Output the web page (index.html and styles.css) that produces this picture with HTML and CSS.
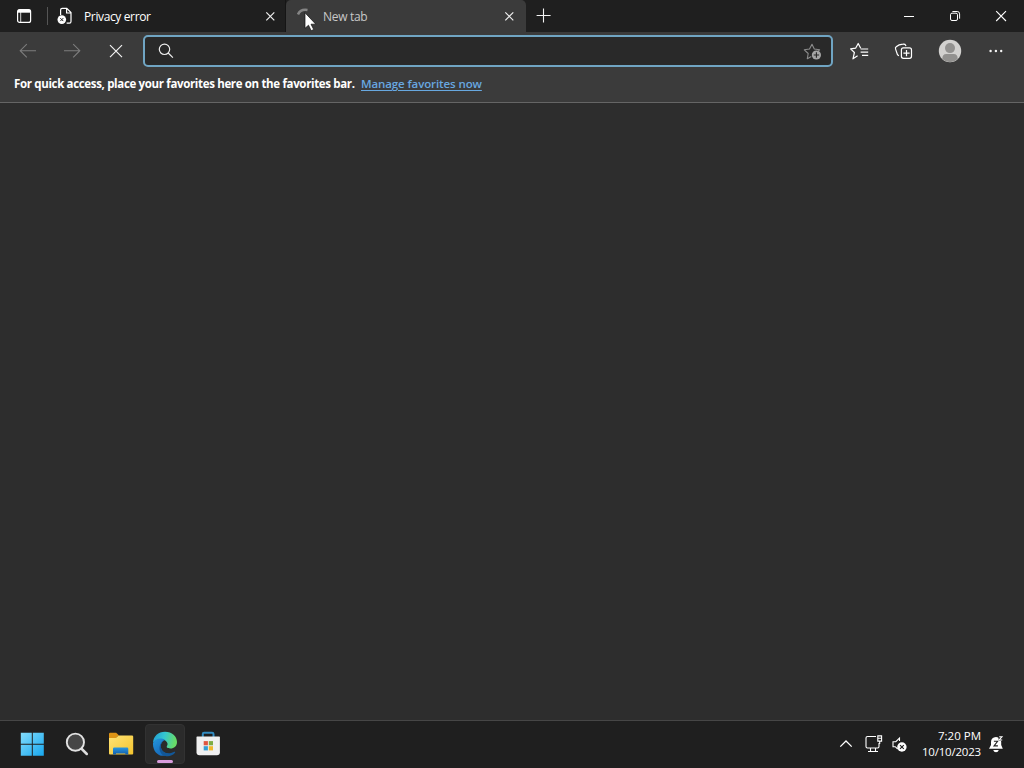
FILE: index.html
```html
<!DOCTYPE html>
<html lang="en">
<head>
<meta charset="utf-8">
<title>New tab</title>
<link rel="stylesheet" href="styles.css">
</head>
<body>
<div class="screen">
  <header class="titlebar">
    <div class="tab-actions">
      <svg width="16" height="16" viewBox="0 0 16 16" fill="none" stroke="#fff" stroke-width="1.2"><rect x="1.6" y="1.6" width="13" height="12.8" rx="2"/><path d="M2 3.2h12.4" stroke-width="3"/><path d="M4.7 4v10" stroke-width=".8"/></svg>
    </div>
    <div class="tab">
      <svg class="favicon" width="16" height="18" viewBox="0 0 16 18" fill="none" stroke="#fff" stroke-width="1.2"><path d="M3.6 8V3q0-1.6 1.6-1.6h4.6l4.2 4.2v9q0 1.6-1.6 1.6H9.6M9.6 1.6V6H14"/><circle cx="4.8" cy="12.6" r="4.3" fill="#fff" stroke="none"/><path d="M3.3 11.1l3 3m0-3l-3 3" stroke="#222" stroke-width="1"/></svg>
      <span class="label label-privacy">Privacy error</span>
      <svg class="tab-close" width="10" height="10" viewBox="0 0 10 10" stroke="#eee" stroke-width="1.2"><path d="M1.3 1.3l8 8m0-8l-8 8"/></svg>
    </div>
    <div class="tab active">
      <svg class="favicon" width="16" height="18" viewBox="0 0 16 18" fill="none" stroke="#858585" stroke-width="2.5"><path d="M1 7.4Q3.5 1.8 10.5 3"/></svg>
      <span class="label label-new">New tab</span>
      <svg class="tab-close" width="10" height="10" viewBox="0 0 10 10" stroke="#eee" stroke-width="1.2"><path d="M1.3 1.3l8 8m0-8l-8 8"/></svg>
    </div>
    <div class="new-tab"><svg width="16" height="16" viewBox="0 0 16 16" stroke="#f4f4f4" stroke-width="1.1"><path d="M.6 7.5h14M7.5.5v14"/></svg></div>
    <div class="window-controls">
      <svg width="46" height="32" viewBox="0 0 46 32" stroke="#fff"><path d="M18 16.5h10"/></svg>
      <svg width="46" height="32" viewBox="0 0 46 32" fill="none" stroke="#fff"><rect x="18.5" y="13.2" width="7" height="7.3" rx="1.5"/><path d="M20.4 11.5h4.8q2.4 0 2.4 2.4v4.8"/></svg>
      <svg width="46" height="32" viewBox="0 0 46 32" stroke="#fff" stroke-width="1.1"><path d="M18.2 11.2l9.8 9.8m0-9.8L18.2 21"/></svg>
    </div>
  </header>

  <nav class="toolbar">
    <div class="nav-buttons">
      <svg width="44" height="38" viewBox="0 0 44 38" fill="none" stroke="#7d7d7d" stroke-width="1.1"><path d="M30 18.7H14.2m6.6-6.6l-6.6 6.6 6.6 6.6"/></svg>
      <svg width="44" height="38" viewBox="0 0 44 38" fill="none" stroke="#7d7d7d" stroke-width="1.1"><path d="M14 18.7h15.8m-6.6-6.6l6.6 6.6-6.6 6.6"/></svg>
      <svg width="44" height="38" viewBox="0 0 44 38" stroke="#f3f3f3" stroke-width="1.2"><path d="M16 13.1l12 12m0-12l-12 12"/></svg>
    </div>
    <div class="address">
      <svg width="16" height="16" viewBox="0 0 16 16" fill="none" stroke="#eee" stroke-width="1.2"><circle cx="6.5" cy="6.3" r="5.2"/><path d="M10.2 10l4.7 4.7"/></svg>
      <svg width="20" height="20" viewBox="0 0 20 20" fill="none" stroke="#8c8c8c" stroke-width="1.1" stroke-linejoin="round"><path d="M8.3 15.6l-4 2.1.9-5.2L1.3 8.8l5.2-.8L9 3.2 11.3 8l5.3.8-1.4 1.3"/><circle cx="13.4" cy="14" r="4.6" fill="#a5a5a5" stroke="none"/><path d="M13.4 11.3v5.4m-2.7-2.7h5.4" stroke="#292929"/></svg>
    </div>
    <div class="actions">
      <svg width="44" height="38" viewBox="0 0 44 38" fill="none" stroke="#fff" stroke-width="1.2" stroke-linejoin="round"><path d="M19.6 23.8l-4.6 3 1.4-6.3-3.8-3.6 5-.7 2.6-4.7 2.5 4.7M22.6 17H30.2m-7.6 3.2h7.6m-6.2 3.2h6.2"/></svg>
      <svg width="44" height="38" viewBox="0 0 44 38" fill="none" stroke="#fff" stroke-width="1.2"><path d="M17 23.8q-1-.3-1.6-1.4l-1.8-5.3q-.6-1.4.6-2.3 2.6-2.4 6.7-2.7 2.2-.3 2.7 1l.3 1"/><rect x="19.4" y="15.9" width="10.1" height="10.4" rx="2"/><path d="M24.5 18v6.2m-3.1-3.1h6.2"/></svg>
      <svg class="profile" width="46" height="38" viewBox="0 0 46 38"><circle cx="24" cy="19" r="11.2" fill="#d2d1cf"/><circle cx="24" cy="16.1" r="5" fill="#92918f"/><path d="M16.3 27.1q0-5 4-5h7.4q4 0 4 5a11.2 11.2 0 0 1-15.4 0z" fill="#92918f"/></svg>
      <svg width="46" height="38" viewBox="0 0 46 38" fill="#f4f4f4"><circle cx="18.6" cy="19" r="1.2"/><circle cx="23.9" cy="19" r="1.2"/><circle cx="29.2" cy="19" r="1.2"/></svg>
    </div>
  </nav>
  <div class="favorites"><span class="hint">For quick access, place your favorites here on the favorites bar.</span><a class="manage">Manage favorites now</a></div>
  <main class="page"></main>

  <footer class="taskbar">
    <div class="apps">
      <div class="app start"><svg width="24" height="24" viewBox="0 0 24 24"><defs><linearGradient id="win" x2="1" y2="1"><stop stop-color="#83dcfb"/><stop offset="1" stop-color="#17a7ef"/></linearGradient></defs><path d="M.8.8h11v11H.8zm12 0h11v11h-11zm-12 12h11v11H.8zm12 0h11v11h-11z" fill="url(#win)"/></svg></div>
      <div class="app"><svg width="24" height="24" viewBox="0 0 24 24"><path d="M16.8 17l5 5" stroke="#ddd" stroke-width="2.5" stroke-linecap="round"/><circle cx="10.4" cy="10.2" r="8.6" fill="#464646" stroke="#e2e2e2" stroke-width="1.9"/></svg></div>
      <div class="app"><svg width="26" height="24" viewBox="0 0 26 24"><defs><linearGradient id="folder" x2="1" y2="1"><stop stop-color="#ffe477"/><stop offset="1" stop-color="#f3c32d"/></linearGradient><linearGradient id="shelf" x2="0" y2="1"><stop stop-color="#2897df"/><stop offset="1" stop-color="#135daa"/></linearGradient></defs><path d="M1 2q0-1.2 1.2-1.2h6L11 3.5 8 6H1z" fill="#de9415"/><path d="M1 6h6.8l3-2.6H24q1.2 0 1.2 1.2v17q0 1-1 1H2q-1 0-1-1z" fill="url(#folder)"/><path d="M5 22.6v-5.8q0-1.2 1.2-1.2h12.9q1.2 0 1.2 1.2v5.8h-3v-1H8v1z" fill="url(#shelf)"/></svg></div>
      <div class="app running"><svg width="26" height="26" viewBox="0 0 26 26"><defs><linearGradient id="edge-top" x2="1" y2=".2"><stop stop-color="#209bd4"/><stop offset=".5" stop-color="#34c6d1"/><stop offset="1" stop-color="#68dc67"/></linearGradient><linearGradient id="edge-low" x2=".7" y2="1"><stop stop-color="#2496dd"/><stop offset="1" stop-color="#1464b6"/></linearGradient></defs><path d="M1 12C1.3 5 6.2.7 13 .7c7 0 12 4.8 12 10.2 0 4.2-3 6.5-6.5 6.5-4 0-4.2-1.7-3.4-2.7 1-1.3.4-3.7-1.5-5C9.3 6.8 3.1 8.6 1 12z" fill="url(#edge-top)"/><path d="M1 12.3C2.5 7.8 8.7 5.9 13 9c-2 .7-4.2 2.8-4.2 6.1 0 5.5 4.6 8.1 9.1 7.3-9 6.4-17.3-.8-16.9-10.1z" fill="url(#edge-low)"/><path d="M12.3 9.3c-2 1.4-3.5 3-3.5 5.8 0 6.2 6.5 9.2 12.9 6 1-.5 2-.2 1.3.7-2 2.8-6 4-9.5 3.3C7 23.8 4.8 13.6 12.3 9.3z" fill="#125798"/></svg><span class="indicator"></span></div>
      <div class="app"><svg width="26" height="26" viewBox="0 0 26 26"><path d="M7.8 7V3q0-1.3 1.3-1.3h8Q18.5 1.7 18.5 3v4" fill="none" stroke="#328cc1" stroke-width="2"/><path d="M2.2 5.4h22q.7 0 .7.7v15.2q0 3-3 3H4.5q-3 0-3-3V6.1q0-.7.7-.7z" fill="#f0f0f0"/><path d="M8.7 10.1h4.2v4.2H8.7z" fill="#df5640"/><path d="M13.8 10.1H18v4.2h-4.2z" fill="#7dac43"/><path d="M8.7 15.2h4.2v4.2H8.7z" fill="#329dd3"/><path d="M13.8 15.2H18v4.2h-4.2z" fill="#efb82e"/></svg></div>
    </div>
    <div class="tray">
      <svg class="chevron" width="26" height="26" viewBox="0 0 26 26" fill="none" stroke="#fff" stroke-width="1.3"><path d="M7.3 15.6L13 10l5.7 5.6"/></svg>
      <svg width="26" height="26" viewBox="0 0 26 26" fill="none" stroke="#fff" stroke-width="1.1"><path d="M16 5.5H7.5Q6 5.5 6 7v8.5Q6 17 7.5 17h10q1.5 0 1.5-1.5V12M8 20.5h10M10.5 17v3.5m5-3.5v3.5M17.8 4.9h3.8v5.2h-3.8zM17.8 7.2h3.8M19.7 10v3"/></svg>
      <svg width="26" height="26" viewBox="0 0 26 26" fill="none" stroke="#fff" stroke-width="1.1"><path d="M13.5 10V7L9.8 10.7H7v5h2.2l2.5 2.3"/><circle cx="15.9" cy="16" r="4.7" fill="#fff" stroke="none"/><path d="M14 14.1l3.8 3.8m0-3.8L14 17.9" stroke="#222"/></svg>
      <div class="clock"><span class="time">7:20 PM</span><span class="date">10/10/2023</span></div>
      <svg class="bell" width="18" height="20" viewBox="0 0 18 20"><path d="M3 11V8q0-4.7 5-5 5.2.3 5.2 5v3l1.6 3.7H1z" fill="#fff"/><path d="M5.2 16h5.6q-.7 2.2-2.8 2.2T5.2 16z" fill="#fff"/><path d="M5.9 7.3h3.7L6 11.9h3.9" fill="none" stroke="#222" stroke-width="1.1"/><path d="M10.2 1.5h5.5v5.2h-5" fill="#222"/><path d="M11.2 2.7h2.8L11.2 6h3" fill="none" stroke="#fff" stroke-width="1.1"/></svg>
    </div>
  </footer>
  <svg class="cursor" width="13" height="20" viewBox="0 0 13 20"><path d="M1 .8v15.5l3.5-3.1 2.7 5.5 2.5-1.2L7 12.2h4.8z" fill="#fff" stroke="#111" stroke-width=".7"/></svg>
</div>
</body>
</html>
```
FILE: styles.css
```css
* { box-sizing: border-box; }
body { margin: 0; background: #2d2d2d; color: #fff; font: 12px/16px "Open Sans", "Noto Sans", sans-serif; }
svg { display: block; flex: none; }
.screen { position: relative; display: flex; flex-direction: column; width: 1024px; height: 768px; overflow: hidden; }
.titlebar { display: flex; height: 32px; background: #1f1f1f; }
.tab-actions { display: flex; align-items: center; justify-content: center; width: 48px; border-right: 1px solid #555; height: 18px; margin-top: 7px; }
.tab { display: flex; align-items: center; width: 238px; padding: 0 10px 0 9px; border-right: 1px solid #151515; }
.tab.active { width: 240px; padding-left: 11px; padding-right: 12px; background: #3b3b3b; color: #c8c8c8; border-radius: 5px 5px 0 0; border-right: 0; }
.label { margin-left: 11px; padding-top: 1px; white-space: nowrap; }
.label-privacy { letter-spacing: -.37px; }
.label-new { letter-spacing: -.3px; }
.active .label { margin-left: 10px; }
.tab-close { margin-left: auto; }
.new-tab { display: flex; align-items: center; padding-left: 10px; }
.window-controls { display: flex; margin-left: auto; }
.toolbar { display: flex; align-items: center; height: 38px; padding-left: 6px; background: #3b3b3b; }
.nav-buttons, .actions { display: flex; }
.address { display: flex; align-items: center; justify-content: space-between; width: 690px; height: 32px; margin-left: 5px; padding: 0 8px 0 13px; border: 2px solid #70a5c3; border-radius: 5px; background: #292929; }
.actions { margin-left: 5px; }
.favorites { display: flex; align-items: center; height: 33px; padding: 0 14px 4px; border-bottom: 1px solid #656565; background: #3b3b3b; white-space: nowrap; }
.hint { width: 347px; font-size: 11.5px; font-weight: 700; letter-spacing: -.34px; }
.manage { color: #68a8e0; text-decoration: underline; text-underline-offset: 2px; font-size: 11.5px; font-weight: 600; letter-spacing: -.1px; }
.page { flex: 1; background: #2d2d2d; }
.taskbar { display: flex; align-items: center; justify-content: space-between; height: 48px; padding: 0 18px 0 10px; border-top: 1px solid #464646; background: #1f1f1f; }
.apps, .tray { display: flex; align-items: center; }
.apps { margin: 0 0 1px 2px; }
.tray { margin-bottom: 1px; }
.app { position: relative; display: flex; align-items: center; justify-content: center; width: 40px; height: 40px; margin-right: 4px; border-radius: 4px; }
.start { margin-right: 5px; }
.running { margin-right: 3px; background: #2b2b2b; border: 1px solid #323232; }
.indicator { position: absolute; bottom: 0; left: 11px; width: 16px; height: 3px; border-radius: 2px; background: #d99ddd; }
.chevron { margin-right: 1px; }
.clock { display: flex; flex-direction: column; align-items: flex-end; width: 69px; font-size: 11.5px; }
.date { letter-spacing: -.2px; }
.bell { margin-left: 7px; }
.cursor { position: absolute; left: 304px; top: 12px; }
```
